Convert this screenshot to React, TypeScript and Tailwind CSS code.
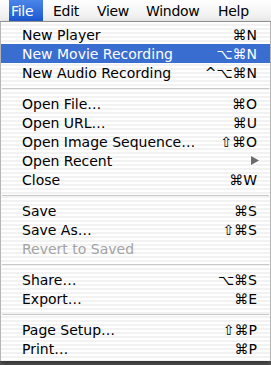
import React from 'react';

type Item =
  | { kind: 'sep' }
  | { kind: 'item'; label: string; shortcut?: string; active?: boolean; disabled?: boolean; submenu?: boolean };

const items: Item[] = [
  { kind: 'item', label: 'New Player', shortcut: '⌘N' },
  { kind: 'item', label: 'New Movie Recording', shortcut: '⌥⌘N', active: true },
  { kind: 'item', label: 'New Audio Recording', shortcut: '^⌥⌘N' },
  { kind: 'sep' },
  { kind: 'item', label: 'Open File…', shortcut: '⌘O' },
  { kind: 'item', label: 'Open URL…', shortcut: '⌘U' },
  { kind: 'item', label: 'Open Image Sequence…', shortcut: '⇧⌘O' },
  { kind: 'item', label: 'Open Recent', submenu: true },
  { kind: 'item', label: 'Close', shortcut: '⌘W' },
  { kind: 'sep' },
  { kind: 'item', label: 'Save', shortcut: '⌘S' },
  { kind: 'item', label: 'Save As…', shortcut: '⇧⌘S' },
  { kind: 'item', label: 'Revert to Saved', disabled: true },
  { kind: 'sep' },
  { kind: 'item', label: 'Share…', shortcut: '⌥⌘S' },
  { kind: 'item', label: 'Export…', shortcut: '⌘E' },
  { kind: 'sep' },
  { kind: 'item', label: 'Page Setup…', shortcut: '⇧⌘P' },
  { kind: 'item', label: 'Print…', shortcut: '⌘P' },
];

// menu bar titles, widths tuned so titles land where the screenshot has them
const menus = [
  { name: 'File', cls: 'w-[34px] pl-[2px]' },
  { name: 'Edit', cls: 'w-[44px] pl-[10px]' },
  { name: 'View', cls: 'w-[49px] pl-[10px]' },
  { name: 'Window', cls: 'w-[72px] pl-[10px]' },
  { name: 'Help', cls: 'flex-1 pl-[10px]' },
];

const MenuRow: React.FC<{ item: Extract<Item, { kind: 'item' }> }> = ({ item }) => {
  const color = item.active ? 'text-white bg-[#3a6dd0]' : item.disabled ? 'text-[#a3a3a3]' : 'text-black';
  return (
    <div className={`flex h-[19px] items-center justify-between pl-[21px] pr-[13px] ${color}`}>
      <span>{item.label}</span>
      {item.submenu ? (
        <svg width="8" height="9" viewBox="0 0 8 9" className="mr-[-2px]">
          <path d="M0 0 L8 4.5 L0 9 Z" fill="#6b6b6b" />
        </svg>
      ) : (
        <span>{item.shortcut}</span>
      )}
    </div>
  );
};

export default function App() {
  return (
    <div className="flex h-[365px] w-[271px] flex-col overflow-hidden bg-[#5c5c5c] font-['DejaVu_Sans',sans-serif] text-[14px] leading-none">
      <div className="flex h-[22px] items-stretch border-b border-[#9a9a9a] bg-[linear-gradient(to_bottom,#ffffff,#ececec)] pl-[9px]">
        {menus.map((m, i) => (
          <div
            key={m.name}
            className={`flex shrink-0 items-center tracking-[-0.3px] ${m.cls} ${i === 0 ? 'bg-[linear-gradient(to_bottom,#4a86e8,#1b58d0)] text-white' : 'text-black'}`}
          >
            {m.name}
          </div>
        ))}
      </div>
      <div className="flex flex-col border-x border-[#b5b5b5] bg-[image:repeating-linear-gradient(to_bottom,#ffffff_0px,#ffffff_2px,#f2f2f2_2px,#f2f2f2_4px)] pb-[3px] pt-[3px] shadow-[0_3px_6px_rgba(0,0,0,0.5)]">
        {items.map((it, i) =>
          it.kind === 'sep' ? (
            <div key={i} className="flex h-[12px] items-center px-[1px]">
              <div className="h-px w-full bg-[#c8c8c8]" />
            </div>
          ) : (
            <MenuRow key={i} item={it} />
          )
        )}
      </div>
    </div>
  );
}
